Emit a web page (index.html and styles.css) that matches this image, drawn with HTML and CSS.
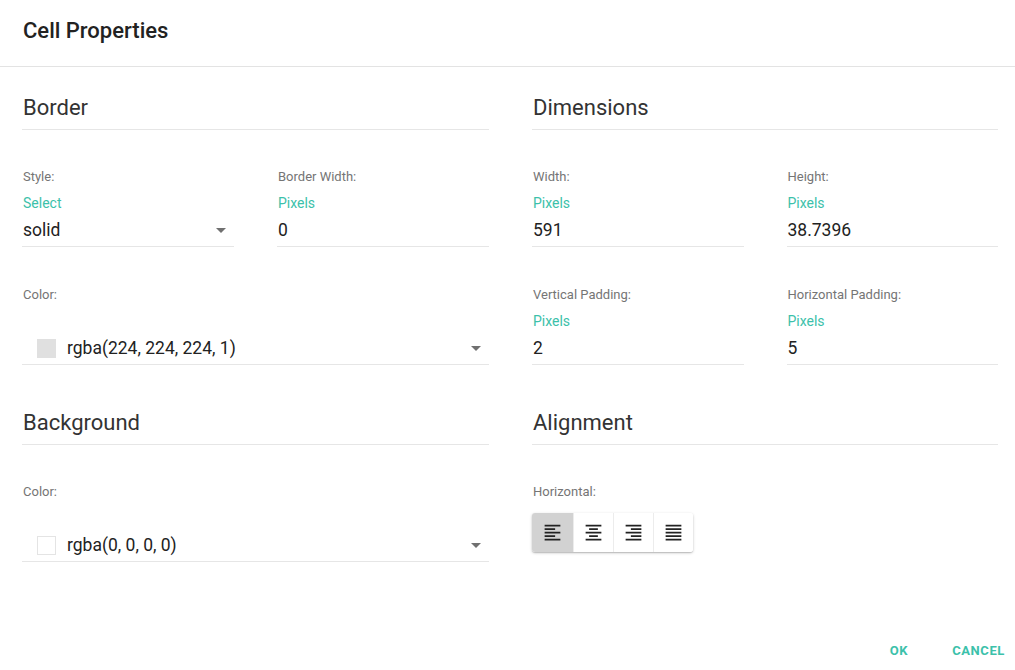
FILE: index.html
```html
<!DOCTYPE html>
<html>
<head>
<meta charset="utf-8">
<title>Cell Properties</title>
<link rel="stylesheet" href="styles.css">
</head>
<body>
<div class="dialog">
  <header class="dialog-header">
    <h1 class="dialog-title">Cell Properties</h1>
  </header>
  <main class="dialog-body">
    <h2 class="section-title">Border</h2>
    <h2 class="section-title">Dimensions</h2>

    <div class="pair">
      <div class="field">
        <div class="label">Style:</div>
        <div class="hint">Select</div>
        <div class="value select">solid<span class="caret"></span></div>
      </div>
      <div class="field">
        <div class="label">Border Width:</div>
        <div class="hint">Pixels</div>
        <div class="value">0</div>
      </div>
    </div>
    <div class="pair">
      <div class="field">
        <div class="label">Width:</div>
        <div class="hint">Pixels</div>
        <div class="value">591</div>
      </div>
      <div class="field">
        <div class="label">Height:</div>
        <div class="hint">Pixels</div>
        <div class="value">38.7396</div>
      </div>
    </div>

    <div class="field">
      <div class="label">Color:</div>
      <div class="value select color-value"><span class="swatch swatch-grey"></span>rgba(224, 224, 224, 1)<span class="caret"></span></div>
    </div>
    <div class="pair">
      <div class="field">
        <div class="label">Vertical Padding:</div>
        <div class="hint">Pixels</div>
        <div class="value">2</div>
      </div>
      <div class="field">
        <div class="label">Horizontal Padding:</div>
        <div class="hint">Pixels</div>
        <div class="value">5</div>
      </div>
    </div>

    <h2 class="section-title">Background</h2>
    <h2 class="section-title">Alignment</h2>

    <div class="field">
      <div class="label">Color:</div>
      <div class="value select color-value"><span class="swatch"></span>rgba(0, 0, 0, 0)<span class="caret"></span></div>
    </div>
    <div class="field plain">
      <div class="label">Horizontal:</div>
      <div class="align-group">
        <button class="align-btn active" title="Left">
          <svg viewBox="0 0 24 24" width="21" height="21"><path d="M15 15H3v2h12v-2zm0-8H3v2h12V7zM3 13h18v-2H3v2zm0 8h18v-2H3v2zM3 3v2h18V3H3z"/></svg>
        </button>
        <button class="align-btn" title="Center">
          <svg viewBox="0 0 24 24" width="21" height="21"><path d="M7 15v2h10v-2H7zm-4 6h18v-2H3v2zm0-8h18v-2H3v2zm4-6v2h10V7H7zM3 3v2h18V3H3z"/></svg>
        </button>
        <button class="align-btn" title="Right">
          <svg viewBox="0 0 24 24" width="21" height="21"><path d="M3 21h18v-2H3v2zm6-4h12v-2H9v2zm-6-4h18v-2H3v2zm6-4h12V7H9v2zM3 3v2h18V3H3z"/></svg>
        </button>
        <button class="align-btn" title="Justify">
          <svg viewBox="0 0 24 24" width="21" height="21"><path d="M3 21h18v-2H3v2zm0-4h18v-2H3v2zm0-4h18v-2H3v2zm0-4h18V7H3v2zm0-6v2h18V3H3z"/></svg>
        </button>
      </div>
    </div>
  </main>
  <footer class="dialog-actions">
    <button class="action">OK</button>
    <button class="action">CANCEL</button>
  </footer>
</div>
</body>
</html>
```

FILE: styles.css
```css
* { box-sizing: border-box; }

html, body {
  margin: 0;
  padding: 0;
  background: #fff;
}

body {
  font-family: Roboto, "Liberation Sans", Arial, sans-serif;
  color: #212121;
}

.dialog {
  width: 1015px;
  height: 670px;
  display: flex;
  flex-direction: column;
}

.dialog-header {
  height: 67px;
  border-bottom: 1px solid #e3e3e3;
  padding: 19px 23px 0;
}

.dialog-title {
  margin: 0;
  font-size: 22px;
  line-height: 24px;
  font-weight: 500;
  color: #222;
}

.dialog-body {
  display: grid;
  grid-template-columns: 467px 466px;
  column-gap: 43px;
  padding: 0 17px 0 22px;
  align-items: start;
}

.section-title {
  margin: 29px 0 0;
  padding: 0 1px 9px;
  font-size: 22px;
  line-height: 24px;
  font-weight: 400;
  color: #333;
  border-bottom: 1px solid #e6e6e6;
}

.dialog-body .section-title:nth-of-type(n+3) {
  margin-top: 46px;
}

.pair {
  display: grid;
  grid-template-columns: 1fr 1fr;
  column-gap: 43px;
}

.field {
  margin-top: 39px;
  display: flex;
  flex-direction: column;
}

.dialog-body > .field:nth-child(5),
.dialog-body > .pair:nth-child(6) {
  margin-top: 40px;
}

.dialog-body > .pair:nth-child(6) .field {
  margin-top: 0;
}

.pair .field { margin-top: 39px; }

.label {
  padding-left: 1px;
  font-size: 13px;
  line-height: 16px;
  color: #757575;
}

.hint {
  margin-top: 9px;
  padding-left: 1px;
  font-size: 14px;
  line-height: 18px;
  color: #3cc1aa;
}

.value {
  position: relative;
  margin-top: 6px;
  padding: 0 1px 4px;
  font-size: 17.5px;
  line-height: 24px;
  color: #222;
  border-bottom: 1px solid #e6e6e6;
}

.color-value {
  margin-top: 33px;
  display: flex;
  align-items: center;
  padding-left: 15px;
}

.swatch {
  width: 19px;
  height: 19px;
  margin-right: 11px;
  border: 1px solid #e4e4e4;
  background: #fff;
}

.swatch-grey {
  background: #e0e0e0;
  border-color: #e0e0e0;
}

.caret {
  position: absolute;
  right: 8px;
  top: 10px;
  width: 0;
  height: 0;
  border-left: 5px solid transparent;
  border-right: 5px solid transparent;
  border-top: 5px solid #707070;
}

.align-group {
  margin-top: 13px;
  display: flex;
  width: 161px;
  border-radius: 3px;
  box-shadow: 0 1px 3px rgba(0,0,0,0.22), 0 1px 1px rgba(0,0,0,0.12);
  overflow: hidden;
}

.align-btn {
  width: 40px;
  height: 39px;
  border: 0;
  border-left: 1px solid #ececec;
  background: #fff;
  padding: 0;
  display: flex;
  align-items: center;
  justify-content: center;
  cursor: pointer;
}

.align-btn:first-child { border-left: 0; width: 41px; }

.align-btn svg { fill: #222; }

.align-btn.active { background: #d2d2d2; }

.dialog-actions {
  margin-top: auto;
  display: flex;
  justify-content: flex-end;
  gap: 28px;
  padding: 0 2px 8px 0;
}

.action {
  border: 0;
  background: transparent;
  padding: 0 8px;
  height: 24px;
  font-family: Roboto, "Liberation Sans", Arial, sans-serif;
  font-size: 13px;
  font-weight: 700;
  letter-spacing: 0.6px;
  color: #3cc1aa;
  cursor: pointer;
}
```
